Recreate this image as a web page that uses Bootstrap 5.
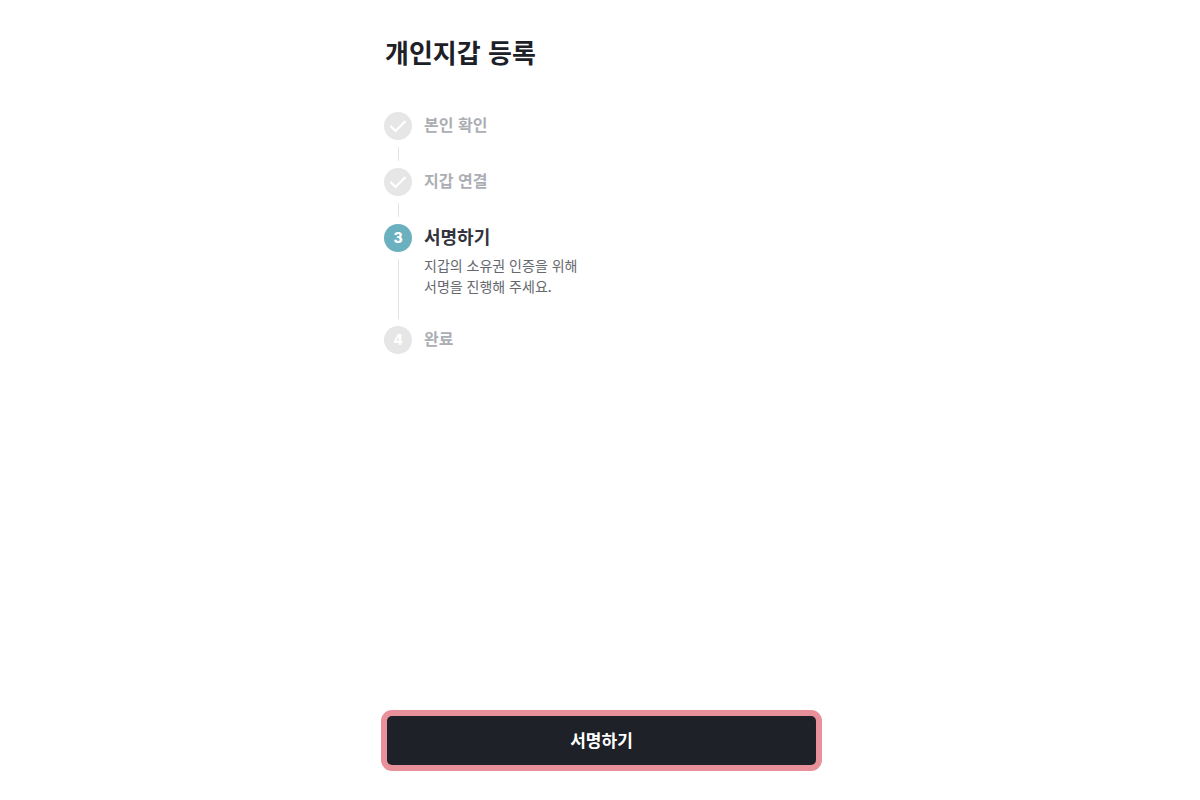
<!DOCTYPE html>
<html lang="ko">
<head>
<meta charset="utf-8">
<meta name="viewport" content="width=device-width, initial-scale=1">
<title>개인지갑 등록</title>
<link href="https://cdn.jsdelivr.net/npm/bootstrap@5.3.0/dist/css/bootstrap.min.css" rel="stylesheet">
<style>
body { font-family: "Noto Sans CJK KR", sans-serif; color: #1e2028; background: #fff; }
.wallet-page { max-width: 444px; padding: 32px 0 29px 3px; }
.wallet-title { font-size: 26px; line-height: 40px; font-weight: 700; padding-left: 4px; margin-bottom: 40px; }
.step-list { padding-left: 3px; }
.step-item { gap: 12px; min-height: 56px; }
.step-rail { width: 28px; gap: 7px; padding-bottom: 7px; }
.step-dot { width: 28px; height: 28px; background: #e6e6e7; color: #fff; font-family: Inter, "Noto Sans CJK KR", sans-serif; font-size: 14px; line-height: 28px; font-weight: 800; }
.step-rail .step-line { width: 1px; background: #e2e2e4; }
.step-name { font-size: 16px; line-height: 24px; font-weight: 700; color: #abaeb3; }
.step-item.current { min-height: 102px; }
.current .step-dot { background: #6bb0be; }
.current .step-name { font-size: 18px; color: #33343e; }
.step-note { font-size: 14px; line-height: 21px; color: #65686e; margin-top: 7px; }
.sign-frame { background: #e8919a; padding: 6px; border-radius: 11px; }
.sign-btn, .sign-btn:hover { background: #1e2128; color: #fff; font-size: 17px; line-height: 25px; font-weight: 700; padding: 11px 12px 13px; border: 0; border-radius: 5px; }
</style>
</head>
<body>
<main class="wallet-page container-fluid min-vh-100 d-flex flex-column">
  <h1 class="wallet-title">개인지갑 등록</h1>
  <ol class="step-list list-unstyled mb-4">
    <li class="step-item d-flex">
      <div class="step-rail d-flex flex-column align-items-center">
        <span class="step-dot rounded-circle d-flex"><svg width="28" height="28" viewBox="0 0 28 28" fill="none" stroke="#fff" stroke-width="2.2" aria-hidden="true"><path d="M6.5 14l5 5L21.500 9"/></svg></span>
        <span class="step-line flex-grow-1"></span>
      </div>
      <div class="step-name">본인 확인</div>
    </li>
    <li class="step-item d-flex">
      <div class="step-rail d-flex flex-column align-items-center">
        <span class="step-dot rounded-circle d-flex"><svg width="28" height="28" viewBox="0 0 28 28" fill="none" stroke="#fff" stroke-width="2.2" aria-hidden="true"><path d="M6.5 14l5 5L21.500 9"/></svg></span>
        <span class="step-line flex-grow-1"></span>
      </div>
      <div class="step-name">지갑 연결</div>
    </li>
    <li class="step-item current d-flex" aria-current="step">
      <div class="step-rail d-flex flex-column align-items-center">
        <span class="step-dot rounded-circle text-center">3</span>
        <span class="step-line flex-grow-1"></span>
      </div>
      <div>
        <div class="step-name">서명하기</div>
        <p class="step-note mb-0">지갑의 소유권 인증을 위해<br>서명을 진행해 주세요.</p>
      </div>
    </li>
    <li class="step-item d-flex">
      <div class="step-rail d-flex flex-column align-items-center">
        <span class="step-dot rounded-circle text-center">4</span>
      </div>
      <div class="step-name">완료</div>
    </li>
  </ol>
  <div class="sign-frame mt-auto">
    <button type="button" class="sign-btn btn w-100 d-block">서명하기</button>
  </div>
</main>
<script src="https://cdn.jsdelivr.net/npm/bootstrap@5.3.0/dist/js/bootstrap.bundle.min.js"></script>
</body>
</html>
